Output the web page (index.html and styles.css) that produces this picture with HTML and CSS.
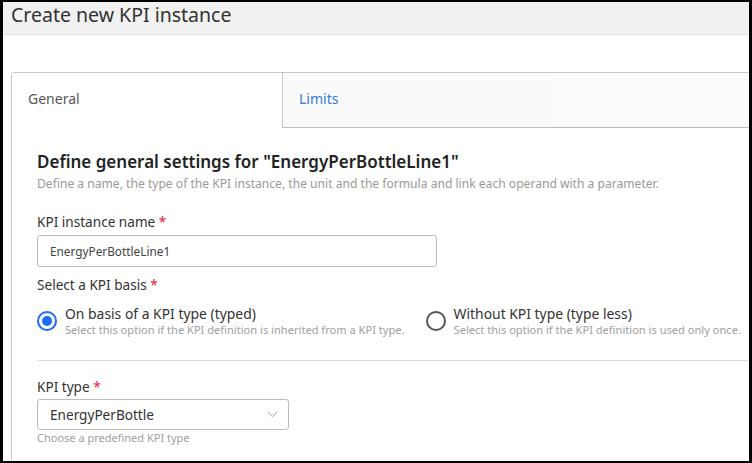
FILE: index.html
```html
<!DOCTYPE html>
<html>
<head>
<meta charset="utf-8">
<link rel="stylesheet" href="styles.css">
</head>
<body>
<div class="frame">
  <div class="header"><h1 class="title">Create new KPI instance</h1></div>
  <div class="main">
    <div class="tabs">
      <div class="tabbar">
        <div class="tab active">General</div>
        <div class="tab limits">Limits</div>
        <div class="tabfill"></div>
      </div>
      <div class="content">
        <h2 class="heading">Define general settings for "EnergyPerBottleLine1"</h2>
        <p class="sub">Define a name, the type of the KPI instance, the unit and the formula and link each operand with a parameter.</p>
        <label class="label">KPI instance name <span class="req">*</span></label>
        <div class="input">EnergyPerBottleLine1</div>
        <div class="label basis">Select a KPI basis <span class="req">*</span></div>
        <div class="radios">
          <div class="radio">
            <span class="circle on"></span>
            <div class="rtext">
              <div class="rlabel">On basis of a KPI type (typed)</div>
              <div class="rsub">Select this option if the KPI definition is inherited from a KPI type.</div>
            </div>
          </div>
          <div class="radio">
            <span class="circle"></span>
            <div class="rtext">
              <div class="rlabel">Without KPI type (type less)</div>
              <div class="rsub">Select this option if the KPI definition is used only once.</div>
            </div>
          </div>
        </div>
        <div class="divider"></div>
        <div class="label kpitype">KPI type <span class="req">*</span></div>
        <div class="select">
          <span>EnergyPerBottle</span>
          <svg class="chev" width="11" height="7" viewBox="0 0 11 7"><path d="M0.8 1 L5.5 5.7 L10.2 1" fill="none" stroke="#9a9a9a" stroke-width="1"/></svg>
        </div>
        <div class="hint">Choose a predefined KPI type</div>
      </div>
    </div>
  </div>
</div>
</body>
</html>
```
FILE: styles.css
```css
* { box-sizing: border-box; }
html, body { margin: 0; padding: 0; background: #000; }
body { font-family: "Noto Sans", "Open Sans", sans-serif; color: #333; }
.frame {
  margin: 2px 3px 2px 3px;
  height: 459px;
  background: #fff;
  overflow: hidden;
}
.header {
  height: 33px;
  background: #f1f1f1;
  border-bottom: 1px solid #e2e2e2;
  padding: 1px 0 0 8px;
}
.title {
  margin: 0;
  font-weight: 400;
  font-size: 19.5px;
  line-height: 24px;
  color: #333;
}
.main { padding: 37px 0 0 8px; }
.tabs {
  border: 1px solid #c8c8c8;
  border-right: none;
  border-bottom: none;
  border-radius: 3px 0 0 0;
  height: 400px;
}
.tabbar { display: flex; height: 55px; }
.tab {
  font-size: 14px;
  line-height: 51px;
  padding-left: 16px;
}
.tab.active { width: 270px; color: #555; background: #fff; }
.tab.limits {
  width: 269px;
  color: #2f7fe0;
  background: #fafafa;
  border-left: 1px solid #c8c8c8;
  border-bottom: 1px solid #bdbdbd;
}
.tabfill {
  flex: 1;
  background: #fbfbfb;
  border-bottom: 1px solid #bdbdbd;
}
.content { padding: 23px 0 0 25px; }
.heading {
  margin: 0;
  font-size: 17px;
  font-weight: 600;
  line-height: 22px;
  color: #222;
}
.sub {
  margin: 3px 0 0;
  font-size: 12.1px;
  line-height: 16px;
  color: #9a9a9a;
}
.label {
  display: block;
  font-size: 13.6px;
  line-height: 18px;
  color: #333;
  margin-top: 21px;
}
.req { color: #e8173b; }
.input {
  margin-top: 4px;
  width: 400px;
  height: 32px;
  border: 1px solid #bcbcbc;
  border-radius: 3px;
  font-size: 11.8px;
  line-height: 30px;
  padding-left: 12px;
  color: #444;
}
.label.basis { margin-top: 9px; }
.radios { display: flex; margin-top: 11px; }
.radio { display: flex; align-items: center; }
.radio + .radio { margin-left: 21px; }
.circle {
  width: 20px;
  height: 20px;
  border-radius: 50%;
  border: 2px solid #555;
  flex: none;
  margin-right: 8px;
  position: relative;
}
.circle.on { border-color: #1a6ef0; }
.circle.on::after {
  content: "";
  position: absolute;
  left: 3px; top: 3px;
  width: 10px; height: 10px;
  border-radius: 50%;
  background: #1a6ef0;
}
.rlabel { font-size: 13.9px; line-height: 17px; color: #333; }
.rsub { font-size: 11.1px; line-height: 15px; color: #a0a0a0; }
.divider {
  margin-top: 23px;
  height: 1px;
  background: #dcdcdc;
}
.label.kpitype { margin-top: 17px; }
.select {
  margin-top: 3px;
  width: 252px;
  height: 31px;
  border: 1px solid #bcbcbc;
  border-radius: 3px;
  display: flex;
  align-items: center;
  justify-content: space-between;
  padding: 0 10px 0 12px;
  font-size: 13.6px;
  color: #333;
}
.hint { font-size: 11px; line-height: 14px; color: #a0a0a0; margin-top: 1px; }
```
